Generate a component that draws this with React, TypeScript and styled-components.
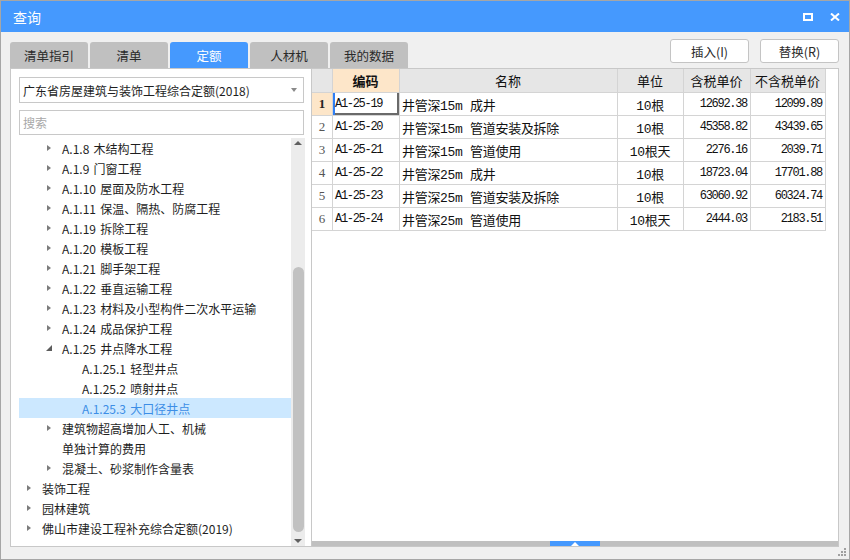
import React from 'react';
import styled, { createGlobalStyle } from 'styled-components';

const colors = {
  blue: '#4599fe',
  body: '#f0f0f0',
  tab: '#c0c0c0',
  border: '#c8c8c8',
  grid: '#d4d4d4',
  header: '#e6e6e6',
  peach: '#fde6c9',
  select: '#cce8ff',
  selectText: '#3d8ee6',
  text: '#1e1e1e',
};

const sans = '"Noto Sans CJK SC", "Microsoft YaHei", sans-serif';
const mono = '"Liberation Mono", "Noto Sans CJK SC", monospace';

const GlobalStyle = createGlobalStyle`
  html, body {
    margin: 0;
    padding: 0;
    background: #ffffff;
  }
  body {
    font-family: ${sans};
    font-size: 12px;
    color: ${colors.text};
  }
  * {
    box-sizing: border-box;
  }
`;

const Window = styled.div`
  position: relative;
  width: 850px;
  height: 560px;
  border: 1px solid #a6a6a6;
  display: flex;
  flex-direction: column;
  background: ${colors.body};
`;

const TitleBar = styled.div`
  height: 31px;
  flex: none;
  display: flex;
  align-items: center;
  padding: 0 9px 0 12px;
  background: ${colors.blue};
  color: #ffffff;
  font-size: 14px;
`;

const Title = styled.div`
  flex: 1;
`;

const TitleIcons = styled.div`
  display: flex;
  align-items: center;
  gap: 17px;
`;

const Body = styled.div`
  flex: 1;
  display: flex;
  flex-direction: column;
  padding: 7px 10px 12px 9px;
`;

const Toolbar = styled.div`
  height: 29px;
  flex: none;
  display: flex;
  justify-content: space-between;
`;

const Tabs = styled.div`
  display: flex;
  gap: 2px;
  align-self: flex-end;
`;

const Tab = styled.div<{ $active?: boolean }>`
  width: 78px;
  height: 26px;
  display: flex;
  align-items: center;
  justify-content: center;
  border-radius: 3px 3px 0 0;
  background: ${(p) => (p.$active ? colors.blue : colors.tab)};
  color: ${(p) => (p.$active ? '#ffffff' : '#2a2a2a')};
  font-size: 12.5px;
`;

const Buttons = styled.div`
  display: flex;
  gap: 11px;
`;

const Button = styled.div`
  width: 79px;
  height: 24px;
  display: flex;
  align-items: center;
  justify-content: center;
  background: #ffffff;
  border: 1px solid #c4c4c4;
  border-radius: 3px;
  font-size: 12.5px;
  color: #2a2a2a;
`;

const Main = styled.div`
  flex: 1;
  display: flex;
  min-height: 0;
`;

const LeftPanel = styled.div`
  width: 302px;
  flex: none;
  display: flex;
  flex-direction: column;
  background: #ffffff;
  border: 1px solid ${colors.border};
  padding: 8px 6px 0 8px;
`;

const Select = styled.div`
  height: 26px;
  flex: none;
  margin-right: 1px;
  display: flex;
  align-items: center;
  justify-content: space-between;
  padding: 0 6px 0 3px;
  border: 1px solid ${colors.border};
  font-size: 12px;
`;

const SelectArrow = styled.div`
  width: 0;
  height: 0;
  border-left: 3.5px solid transparent;
  border-right: 3.5px solid transparent;
  border-top: 4px solid #8a8a8a;
`;

const Search = styled.div`
  height: 25px;
  flex: none;
  margin: 7px 1px 3px 0;
  display: flex;
  align-items: center;
  padding-left: 3px;
  border: 1px solid ${colors.border};
  color: #a8a8a8;
  font-size: 12px;
`;

const TreeArea = styled.div`
  flex: 1;
  display: flex;
  min-height: 0;
`;

const TreeList = styled.div`
  flex: 1;
  overflow: hidden;
`;

const TreeRow = styled.div<{ $level: number; $selected?: boolean }>`
  height: 20px;
  display: flex;
  align-items: center;
  padding-left: ${(p) => 8 + (p.$level - 1) * 20}px;
  background: ${(p) => (p.$selected ? colors.select : 'transparent')};
  color: ${(p) => (p.$selected ? colors.selectText : colors.text)};
  font-size: 12px;
  word-spacing: 1.5px;
  white-space: nowrap;
`;

const Toggle = styled.div`
  width: 15px;
  height: 20px;
  flex: none;
  display: flex;
  align-items: center;
`;

const Collapsed = styled.div`
  width: 0;
  height: 0;
  border-top: 3.5px solid transparent;
  border-bottom: 3.5px solid transparent;
  border-left: 4px solid #7c7c7c;
`;

const Expanded = styled.div`
  width: 0;
  height: 0;
  margin-left: -1px;
  border-left: 6px solid transparent;
  border-bottom: 6px solid #5c5c5c;
`;

const ScrollBar = styled.div`
  width: 14px;
  flex: none;
  display: flex;
  flex-direction: column;
  align-items: center;
  background: #ececec;
`;

const ScrollButton = styled.div`
  height: 10px;
  flex: none;
  display: flex;
  align-items: center;
  justify-content: center;
`;

const ArrowUp = styled.div<{ $color?: string }>`
  width: 0;
  height: 0;
  border-left: 4px solid transparent;
  border-right: 4px solid transparent;
  border-bottom: 4px solid ${(p) => p.$color || '#606060'};
`;

const ArrowDown = styled.div`
  width: 0;
  height: 0;
  border-left: 4px solid transparent;
  border-right: 4px solid transparent;
  border-top: 4px solid #606060;
`;

const Thumb = styled.div<{ $top: number; $height: number }>`
  width: 11px;
  flex: none;
  margin-top: ${(p) => p.$top}px;
  height: ${(p) => p.$height}px;
  border-radius: 6px;
  background: #c1c1c1;
`;

const Spacer = styled.div`
  flex: 1;
`;

const RightPanel = styled.div`
  flex: 1;
  display: flex;
  flex-direction: column;
  background: #ffffff;
  border: 1px solid ${colors.border};
  border-left: none;
`;

const Grid = styled.div`
  display: grid;
  grid-template-columns: 21px 67px 218px 66px 67px 75px;
  width: max-content;
`;

type Kind = 'head' | 'code' | 'text' | 'num';

const Cell = styled.div<{
  $kind?: Kind;
  $align?: 'left' | 'center' | 'right';
  $accent?: boolean;
  $bold?: boolean;
  $focus?: boolean;
  $h?: number;
}>`
  height: ${(p) => p.$h || 23}px;
  display: flex;
  align-items: center;
  justify-content: ${(p) =>
    p.$align === 'right' ? 'flex-end' : p.$align === 'center' ? 'center' : 'flex-start'};
  padding: 0 3px 0 2px;
  border-right: 1px solid ${colors.grid};
  border-bottom: 1px solid ${colors.grid};
  background: ${(p) => (p.$accent ? colors.peach : p.$kind === 'head' ? colors.header : '#ffffff')};
  font-family: ${(p) => (p.$kind === 'head' ? sans : mono)};
  font-size: ${(p) => (p.$kind === 'head' ? '13px' : p.$kind === 'text' ? '13px' : '12px')};
  letter-spacing: ${(p) =>
    p.$kind === 'code' || p.$kind === 'num' ? '-1.3px' : p.$kind === 'text' ? '-0.3px' : '0'};
  font-weight: ${(p) => (p.$bold ? 700 : 400)};
  color: #111111;
  white-space: nowrap;
  box-shadow: ${(p) =>
    p.$focus ? 'inset 2px 0 0 #2f7ff5, inset -2px -2px 0 #6a6a6a' : 'none'};
`;

const RowNum = styled(Cell)`
  font-family: "Liberation Serif", serif;
  font-size: 13px;
  letter-spacing: 0;
  color: ${(p) => (p.$accent ? '#222222' : '#555555')};
  padding: 0;
`;

const Splitter = styled.div`
  margin-top: auto;
  height: 5px;
  flex: none;
  display: flex;
  justify-content: center;
  background: #c0c0c0;
`;

const SplitHandle = styled.div`
  width: 50px;
  display: flex;
  align-items: center;
  justify-content: center;
  background: ${colors.blue};
`;

const Grip = styled.svg`
  position: absolute;
  right: 1px;
  bottom: 1px;
`;

type Node = { label: string; level: number; toggle?: 'collapsed' | 'expanded'; selected?: boolean };

const tree: Node[] = [
  { label: 'A.1.8 木结构工程', level: 2, toggle: 'collapsed' },
  { label: 'A.1.9 门窗工程', level: 2, toggle: 'collapsed' },
  { label: 'A.1.10 屋面及防水工程', level: 2, toggle: 'collapsed' },
  { label: 'A.1.11 保温、隔热、防腐工程', level: 2, toggle: 'collapsed' },
  { label: 'A.1.19 拆除工程', level: 2, toggle: 'collapsed' },
  { label: 'A.1.20 模板工程', level: 2, toggle: 'collapsed' },
  { label: 'A.1.21 脚手架工程', level: 2, toggle: 'collapsed' },
  { label: 'A.1.22 垂直运输工程', level: 2, toggle: 'collapsed' },
  { label: 'A.1.23 材料及小型构件二次水平运输', level: 2, toggle: 'collapsed' },
  { label: 'A.1.24 成品保护工程', level: 2, toggle: 'collapsed' },
  { label: 'A.1.25 井点降水工程', level: 2, toggle: 'expanded' },
  { label: 'A.1.25.1 轻型井点', level: 3 },
  { label: 'A.1.25.2 喷射井点', level: 3 },
  { label: 'A.1.25.3 大口径井点', level: 3, selected: true },
  { label: '建筑物超高增加人工、机械', level: 2, toggle: 'collapsed' },
  { label: '单独计算的费用', level: 2 },
  { label: '混凝土、砂浆制作含量表', level: 2, toggle: 'collapsed' },
  { label: '装饰工程', level: 1, toggle: 'collapsed' },
  { label: '园林建筑', level: 1, toggle: 'collapsed' },
  { label: '佛山市建设工程补充综合定额(2019)', level: 1, toggle: 'collapsed' },
];

const rows = [
  ['A1-25-19', '井管深15m 成井', '10根', '12692.38', '12099.89'],
  ['A1-25-20', '井管深15m 管道安装及拆除', '10根', '45358.82', '43439.65'],
  ['A1-25-21', '井管深15m 管道使用', '10根天', '2276.16', '2039.71'],
  ['A1-25-22', '井管深25m 成井', '10根', '18723.04', '17701.88'],
  ['A1-25-23', '井管深25m 管道安装及拆除', '10根', '63060.92', '60324.74'],
  ['A1-25-24', '井管深25m 管道使用', '10根天', '2444.03', '2183.51'],
];

const tabs = ['清单指引', '清单', '定额', '人材机', '我的数据'];

export default function App(): JSX.Element {
  return (
    <>
      <GlobalStyle />
      <Window>
        <TitleBar>
          <Title>查询</Title>
          <TitleIcons>
            <svg width="10" height="8" viewBox="0 0 10 8">
              <rect x="1" y="1" width="8" height="6" fill="none" stroke="#fff" strokeWidth="2" />
            </svg>
            <svg width="10" height="8" viewBox="0 0 10 8">
              <path d="M1 0.5 L9 7.5 M9 0.5 L1 7.5" stroke="#fff" strokeWidth="2" />
            </svg>
          </TitleIcons>
        </TitleBar>
        <Body>
          <Toolbar>
            <Tabs>
              {tabs.map((t) => (
                <Tab key={t} $active={t === '定额'}>
                  {t}
                </Tab>
              ))}
            </Tabs>
            <Buttons>
              <Button>插入(I)</Button>
              <Button>替换(R)</Button>
            </Buttons>
          </Toolbar>
          <Main>
            <LeftPanel>
              <Select>
                <span>广东省房屋建筑与装饰工程综合定额(2018)</span>
                <SelectArrow />
              </Select>
              <Search>搜索</Search>
              <TreeArea>
                <TreeList>
                  {tree.map((n) => (
                    <TreeRow key={n.label} $level={n.level} $selected={n.selected}>
                      <Toggle>
                        {n.toggle === 'collapsed' && <Collapsed />}
                        {n.toggle === 'expanded' && <Expanded />}
                      </Toggle>
                      {n.label}
                    </TreeRow>
                  ))}
                </TreeList>
                <ScrollBar>
                  <ScrollButton>
                    <ArrowUp />
                  </ScrollButton>
                  <Thumb $top={119} $height={265} />
                  <Spacer />
                  <ScrollButton>
                    <ArrowDown />
                  </ScrollButton>
                </ScrollBar>
              </TreeArea>
            </LeftPanel>
            <RightPanel>
              <Grid>
                <RowNum $kind="head" $h={24} />
                <Cell $kind="head" $accent $bold $align="center" $h={24}>编码</Cell>
                <Cell $kind="head" $align="center" $h={24}>名称</Cell>
                <Cell $kind="head" $align="center" $h={24}>单位</Cell>
                <Cell $kind="head" $align="center" $h={24}>含税单价</Cell>
                <Cell $kind="head" $align="center" $h={24}>不含税单价</Cell>
                {rows.map((r, i) => (
                  <React.Fragment key={r[0]}>
                    <RowNum $align="center" $accent={i === 0} $bold={i === 0}>
                      {i + 1}
                    </RowNum>
                    <Cell $kind="code" $focus={i === 0}>{r[0]}</Cell>
                    <Cell $kind="text">{r[1]}</Cell>
                    <Cell $kind="text" $align="center">{r[2]}</Cell>
                    <Cell $kind="num" $align="right">{r[3]}</Cell>
                    <Cell $kind="num" $align="right">{r[4]}</Cell>
                  </React.Fragment>
                ))}
              </Grid>
              <Splitter>
                <SplitHandle>
                  <ArrowUp $color="#ffffff" />
                </SplitHandle>
              </Splitter>
            </RightPanel>
          </Main>
        </Body>
        <Grip width="12" height="12" viewBox="0 0 12 12">
          <rect x="8" y="2" width="2" height="2" fill="#a0a0a0" />
          <rect x="5" y="5" width="2" height="2" fill="#a0a0a0" />
          <rect x="8" y="5" width="2" height="2" fill="#a0a0a0" />
          <rect x="2" y="8" width="2" height="2" fill="#a0a0a0" />
          <rect x="5" y="8" width="2" height="2" fill="#a0a0a0" />
          <rect x="8" y="8" width="2" height="2" fill="#a0a0a0" />
        </Grip>
      </Window>
    </>
  );
}
